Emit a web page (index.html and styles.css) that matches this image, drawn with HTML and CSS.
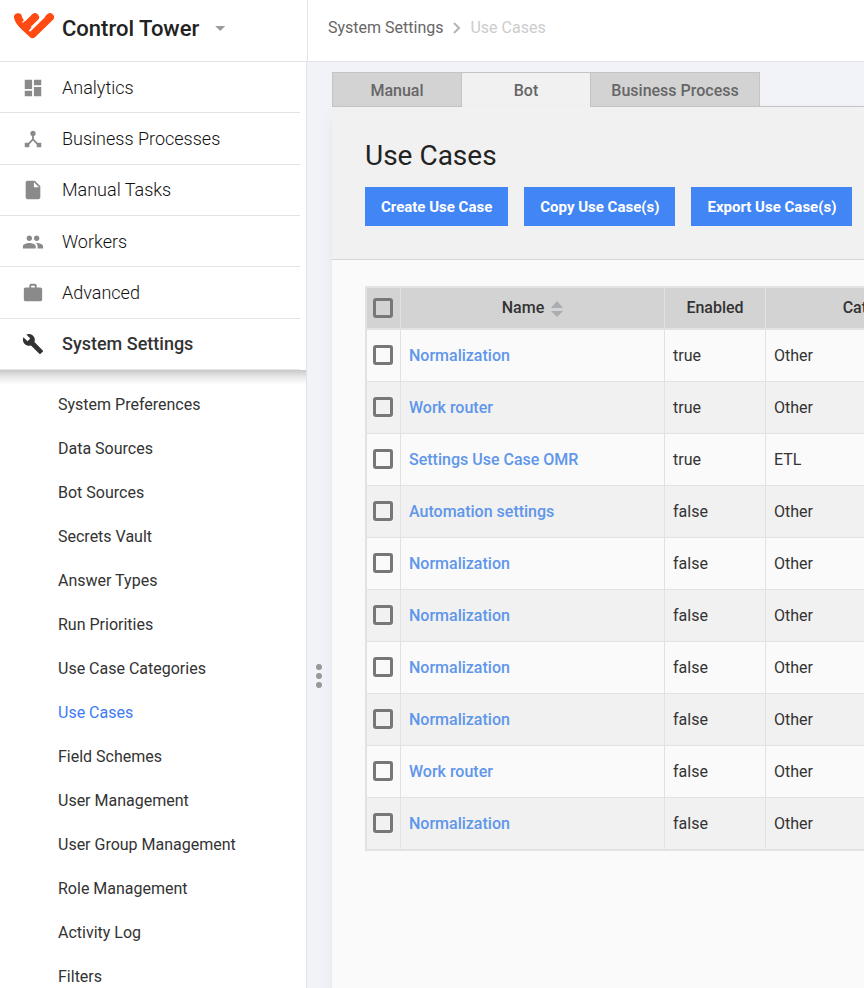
FILE: index.html
```
<!DOCTYPE html>
<html lang="en">
<head>
<meta charset="utf-8">
<title>Control Tower - Use Cases</title>
<link rel="stylesheet" href="styles.css">
</head>
<body>

<!-- left menu -->
<aside class="sidebar">
	<header class="brand">
		<svg class="logo" viewBox="0 0 40 26" fill="none" stroke="#ff4a13" stroke-width="8" stroke-linecap="round" stroke-linejoin="round">
			<path d="M4 4.200Q5 9 11 14L18.500 21L36 4.200"/>
			<path d="M21 4.200L11 14"/>
			<path d="M16 17.500L30.300 3.500" stroke="#fff" stroke-width="1.800"/>
			<path d="M8.800 9.200L15 3" stroke="#fff" stroke-width="1.200"/>
		</svg>
		<span class="brand-name">Control Tower</span>
		<button class="brand-toggle" aria-label="Switch application"></button>
	</header>

	<nav>
		<ul class="menu">
			<li><a href="#"><svg viewBox="0 0 24 24"><path d="M3 13h8V3H3v10zm0 8h8v-6H3v6zm10 0h8V11h-8v10zm0-18v6h8V3h-8z"/></svg>Analytics</a></li>
			<li><a href="#"><svg viewBox="0 0 24 24"><path d="M17 16l-4-4V8.820C14.160 8.400 15 7.300 15 6c0-1.660-1.340-3-3-3S9 4.340 9 6c0 1.300.840 2.400 2 2.820V12l-4 4H3v5h5v-3.050l4-4.200 4 4.200V21h5v-5h-4z"/></svg>Business Processes</a></li>
			<li><a href="#"><svg viewBox="0 0 24 24"><path d="M6 2c-1.100 0-1.990.900-1.990 2L4 20c0 1.100.890 2 1.990 2H18c1.100 0 2-.900 2-2V8l-6-6H6zm7 7V3.500L18.500 9H13z"/></svg>Manual Tasks</a></li>
			<li><a href="#"><svg viewBox="0 0 24 24"><path d="M16 11c1.660 0 2.990-1.340 2.990-3S17.660 5 16 5c-1.660 0-3 1.340-3 3s1.340 3 3 3zm-8 0c1.660 0 2.990-1.340 2.990-3S9.660 5 8 5C6.340 5 5 6.340 5 8s1.340 3 3 3zm0 2c-2.330 0-7 1.170-7 3.500V19h14v-2.500c0-2.330-4.670-3.500-7-3.500zm8 0c-.290 0-.620.020-.970.050 1.160.840 1.970 1.970 1.970 3.450V19h6v-2.500c0-2.330-4.670-3.500-7-3.500z"/></svg>Workers</a></li>
			<li><a href="#"><svg viewBox="0 0 24 24"><path d="M20 6h-4V4c0-1.110-.890-2-2-2h-4c-1.110 0-2 .890-2 2v2H4c-1.110 0-1.990.890-1.990 2L2 19c0 1.110.890 2 2 2h16c1.110 0 2-.890 2-2V8c0-1.110-.890-2-2-2zm-6 0h-4V4h4v2z"/></svg>Advanced</a></li>
			<li class="active"><a href="#"><svg viewBox="0 0 24 24"><path d="M22.700 19l-9.100-9.100c.900-2.300.400-5-1.500-6.900-2-2-5-2.400-7.400-1.300L9 6 6 9 1.600 4.700C.400 7.100.900 10.100 2.900 12.100c1.900 1.900 4.600 2.400 6.900 1.500l9.100 9.100c.400.400 1 .400 1.400 0l2.300-2.300c.500-.400.500-1.100.100-1.400z"/></svg>System Settings</a></li>
		</ul>
		<ul class="submenu">
			<li><a href="#">System Preferences</a></li>
			<li><a href="#">Data Sources</a></li>
			<li><a href="#">Bot Sources</a></li>
			<li><a href="#">Secrets Vault</a></li>
			<li><a href="#">Answer Types</a></li>
			<li><a href="#">Run Priorities</a></li>
			<li><a href="#">Use Case Categories</a></li>
			<li class="current"><a href="#">Use Cases</a></li>
			<li><a href="#">Field Schemes</a></li>
			<li><a href="#">User Management</a></li>
			<li><a href="#">User Group Management</a></li>
			<li><a href="#">Role Management</a></li>
			<li><a href="#">Activity Log</a></li>
			<li><a href="#">Filters</a></li>
		</ul>
	</nav>
</aside>

<main class="main">
	<div class="breadcrumb">
		<a href="#">System Settings</a>
		<svg viewBox="0 0 8 12"><path d="M1 1L6 6L1 11"/></svg>
		<span>Use Cases</span>
	</div>

	<div class="workspace">
		<div class="splitter"><i></i><i></i><i></i></div>

		<div class="content">
			<div class="tabs">
				<button class="tab">Manual</button>
				<button class="tab selected">Bot</button>
				<button class="tab wide">Business Process</button>
			</div>

			<section class="panel">
				<div class="panel-head">
					<h1>Use Cases</h1>
					<div class="actions">
						<button>Create Use Case</button>
						<button>Copy Use Case(s)</button>
						<button>Export Use Case(s)</button>
					</div>
				</div>

				<div class="panel-body">
					<table class="grid">
						<colgroup><col class="c-check"><col class="c-name"><col class="c-enabled"><col class="c-category"></colgroup>
						<thead>
							<tr>
								<th><input type="checkbox" aria-label="Select all"></th>
								<th>Name<svg class="sort" viewBox="0 0 12 16"><path d="M0 7L6 0L12 7zM0 10L6 16L12 10z"/></svg></th>
								<th>Enabled</th>
								<th>Category</th>
							</tr>
						</thead>
						<tbody>
							<tr><td><input type="checkbox" aria-label="Select row 1"></td><td><a href="#">Normalization</a></td><td>true</td><td>Other</td></tr>
							<tr><td><input type="checkbox" aria-label="Select row 2"></td><td><a href="#">Work router</a></td><td>true</td><td>Other</td></tr>
							<tr><td><input type="checkbox" aria-label="Select row 3"></td><td><a href="#">Settings Use Case OMR</a></td><td>true</td><td>ETL</td></tr>
							<tr><td><input type="checkbox" aria-label="Select row 4"></td><td><a href="#">Automation settings</a></td><td>false</td><td>Other</td></tr>
							<tr><td><input type="checkbox" aria-label="Select row 5"></td><td><a href="#">Normalization</a></td><td>false</td><td>Other</td></tr>
							<tr><td><input type="checkbox" aria-label="Select row 6"></td><td><a href="#">Normalization</a></td><td>false</td><td>Other</td></tr>
							<tr><td><input type="checkbox" aria-label="Select row 7"></td><td><a href="#">Normalization</a></td><td>false</td><td>Other</td></tr>
							<tr><td><input type="checkbox" aria-label="Select row 8"></td><td><a href="#">Normalization</a></td><td>false</td><td>Other</td></tr>
							<tr><td><input type="checkbox" aria-label="Select row 9"></td><td><a href="#">Work router</a></td><td>false</td><td>Other</td></tr>
							<tr><td><input type="checkbox" aria-label="Select row 10"></td><td><a href="#">Normalization</a></td><td>false</td><td>Other</td></tr>
						</tbody>
					</table>
				</div>
			</section>
		</div>
	</div>
</main>

</body>
</html>
```
FILE: styles.css
```
* {
box-sizing: border-box;
}
body {
margin: 0;
display: flex;
height: 100vh;
overflow: hidden;
background: #fff;
color: #333;
font: 16px/20px Roboto, sans-serif;
}
a {
color: inherit;
text-decoration: none;
}
button {
font-family: inherit;
cursor: pointer;
}
ul {
margin: 0;
padding: 0;
list-style: none;
}

/* left menu */
.sidebar {
flex: 0 0 307px;
overflow: hidden;
}
.brand {
display: flex;
align-items: center;
height: 62px;
padding: 0 14px 4px;
border-bottom: 1px solid #e2e3e6;
}
.logo {
width: 40px;
height: 26px;
margin: 0 8px 6px 0;
}
.brand-name {
color: #222;
font-size: 22px;
font-weight: 500;
}
.brand-toggle {
width: 10px;
height: 5px;
margin-left: 16px;
padding: 0;
border: 0;
background: #9b9b9b;
clip-path: polygon(0 0, 100% 0, 50% 100%);
}
.sidebar nav {
min-height: 100%;
border-right: 1px solid #e2e3e6;
}
.menu {
display: grid;
grid-template-rows: repeat(6, 1fr);
height: 308px;
margin-right: 6px;
}
.menu li {
display: grid;
border-bottom: 1px solid #e4e4e4;
}
.menu a {
display: flex;
align-items: center;
padding: 1px 0 0 22px;
color: #111;
font-size: 18px;
font-weight: 300;
}
.menu svg {
width: 22px;
height: 22px;
margin-right: 18px;
fill: #8a8a8a;
}
.menu .active a {
color: #333;
font-weight: 500;
}
.menu .active svg {
fill: #333;
}
.submenu {
padding: 13px 0 0 58px;
background: linear-gradient(#c8c8c8, #e9e9e9 7px, #fff 15px);
}
.submenu a {
display: block;
line-height: 44px;
}
.submenu .current {
color: #3d7bf5;
}

/* top line with the path */
.main {
flex: 1;
min-width: 0;
display: flex;
flex-direction: column;
overflow: hidden;
}
.breadcrumb {
display: flex;
align-items: center;
flex: 0 0 62px;
padding: 0 20px 6px;
border-left: 1px solid #e2e3e6;
border-bottom: 1px solid #e2e3e6;
color: #666;
}
.breadcrumb svg {
width: 8px;
height: 12px;
margin: 0 9px 0 10px;
fill: none;
stroke: #b5b5b5;
stroke-width: 2;
}
.breadcrumb span {
color: #ccc;
}
.workspace {
flex: 1;
display: flex;
background: #f2f3f8;
}
.splitter {
flex: 0 0 25px;
display: flex;
flex-direction: column;
align-items: center;
gap: 3px;
padding: 602px 1px 0 0;
}
.splitter i {
width: 6px;
height: 6px;
border-radius: 50%;
background: #999;
}
.content {
flex: 1;
min-width: 0;
display: flex;
flex-direction: column;
padding-top: 10px;
}

/* tabs */
.tabs {
display: flex;
box-shadow: inset 0 -1px #c4c4c4;
}
.tab {
width: 130px;
height: 35px;
padding: 2px 0 0;
border: 1px solid #c4c4c4;
background: #d3d3d3;
color: #666;
font-size: 16px;
font-weight: 500;
}
.tab.selected {
width: 128px;
padding: 0;
border-width: 1px 0 0;
background: #f1f1f1;
}
.tab.wide {
width: 170px;
}

/* panel */
.panel {
flex: 1;
background: #fafafa;
box-shadow: 0 8px 16px rgba(0, 0, 30, 0.06);
}
.panel-head {
padding: 33px;
border-bottom: 1px solid #d5d5d5;
background: #f1f1f1;
}
h1 {
margin: 0 0 15px;
color: #222;
font-size: 28px;
font-weight: 400;
line-height: 32px;
}
.actions {
display: flex;
gap: 16px;
}
.actions button {
flex: none;
height: 39px;
padding: 0 16px;
border: 0;
background: #4285f4;
color: #fff;
font-size: 15px;
font-weight: 700;
}
.panel-body {
padding: 26px 33px;
}

/* list of use cases */
.grid {
width: 100%;
min-width: 622px;
table-layout: fixed;
border: 2px solid #e2e2e2;
border-spacing: 0;
}
.c-check { width: 34px; }
.c-name { width: 264px; }
.c-enabled { width: 101px; }
.grid th {
height: 42px;
padding: 0;
border-right: 1px solid #e2e2e2;
border-bottom: 2px solid #e2e2e2;
background: #d3d3d3;
font-weight: 500;
}
.grid td {
height: 52px;
padding: 0 8px;
border-right: 1px solid #e2e2e2;
border-bottom: 1px solid #e2e2e2;
}
.grid tbody tr:nth-child(even) td {
background: #f1f1f1;
}
.grid tbody tr:last-child td {
height: 51px;
border-bottom: 0;
}
.grid td:first-child {
padding: 0 0 1px;
}
.grid a {
color: #6096ea;
font-weight: 500;
}
.grid input {
appearance: none;
display: block;
width: 20px;
height: 20px;
margin: 0 0 0 6px;
border: 3px solid #777;
border-radius: 3px;
}
.sort {
width: 12px;
height: 16px;
margin-left: 7px;
vertical-align: -4px;
fill: #a9adb1;
}
```
